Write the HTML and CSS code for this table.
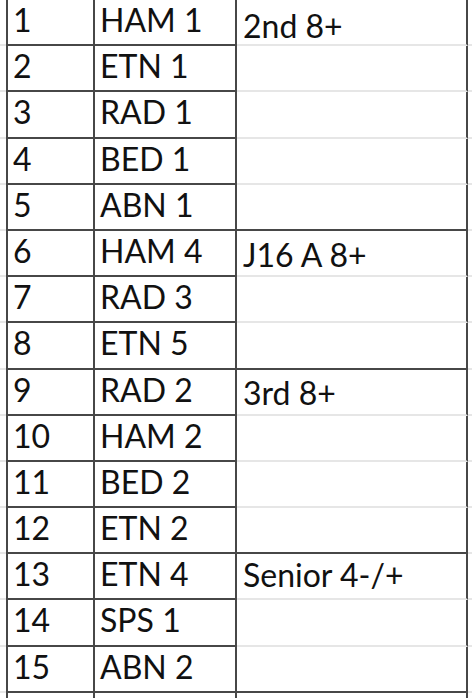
FILE: index.html
```html
<!DOCTYPE html>
<html>
<head>
<meta charset="utf-8">
<link rel="stylesheet" href="styles.css">
</head>
<body>
<div class="sheet">
  <div class="gut"></div><div class="c num">1</div><div class="c crew">HAM 1</div><div class="c grp inner g1">2nd 8+</div><div class="gut"></div>
  <div class="gut"></div><div class="c num">2</div><div class="c crew">ETN 1</div><div class="c grp inner"></div><div class="gut"></div>
  <div class="gut"></div><div class="c num">3</div><div class="c crew">RAD 1</div><div class="c grp inner"></div><div class="gut"></div>
  <div class="gut"></div><div class="c num">4</div><div class="c crew">BED 1</div><div class="c grp inner"></div><div class="gut"></div>
  <div class="gut"></div><div class="c num">5</div><div class="c crew">ABN 1</div><div class="c grp"></div><div class="gut"></div>

  <div class="gut"></div><div class="c num">6</div><div class="c crew">HAM 4</div><div class="c grp inner g2">J16 A 8+</div><div class="gut"></div>
  <div class="gut"></div><div class="c num">7</div><div class="c crew">RAD 3</div><div class="c grp inner"></div><div class="gut"></div>
  <div class="gut"></div><div class="c num">8</div><div class="c crew">ETN 5</div><div class="c grp"></div><div class="gut"></div>

  <div class="gut"></div><div class="c num">9</div><div class="c crew">RAD 2</div><div class="c grp inner g3">3rd 8+</div><div class="gut"></div>
  <div class="gut"></div><div class="c num">10</div><div class="c crew">HAM 2</div><div class="c grp inner"></div><div class="gut"></div>
  <div class="gut"></div><div class="c num">11</div><div class="c crew">BED 2</div><div class="c grp inner"></div><div class="gut"></div>
  <div class="gut"></div><div class="c num">12</div><div class="c crew">ETN 2</div><div class="c grp"></div><div class="gut"></div>

  <div class="gut"></div><div class="c num">13</div><div class="c crew">ETN 4</div><div class="c grp inner g4">Senior 4-/+</div><div class="gut"></div>
  <div class="gut"></div><div class="c num">14</div><div class="c crew">SPS 1</div><div class="c grp inner"></div><div class="gut"></div>
  <div class="gut"></div><div class="c num">15</div><div class="c crew">ABN 2</div><div class="c grp"></div><div class="gut"></div>

  <div class="gut tail"></div><div class="c num tail"></div><div class="c crew tail"></div><div class="c grp tail"></div><div class="gut tail"></div>
</div>
</body>
</html>
```

FILE: styles.css
```css
html, body {
  margin: 0;
  padding: 0;
  background: #ffffff;
  overflow: hidden;
}

.sheet {
  display: grid;
  grid-template-columns: 6px 89px 142px 231px 1fr;
  grid-template-rows: repeat(15, 46.2px) 5px;
  font-family: Lato, "Open Sans", sans-serif;
  font-size: 32px;
  line-height: 32px;
  color: #111111;
}

.gut {
  border-bottom: 2px solid #e6e6e6;
  box-sizing: border-box;
}

.c {
  box-sizing: border-box;
  border-right: 2px solid #474747;
  border-bottom: 2px solid #474747;
  padding-top: 4px;
  white-space: nowrap;
}

.num {
  border-left: 2px solid #474747;
  padding-left: 5px;
}

.crew {
  padding-left: 5px;
}

.grp {
  padding-left: 6px;
}

.grp.inner {
  border-bottom-color: #e6e6e6;
}

.g1 { padding-top: 10px; }
.g2 { padding-top: 8px; }
.g3 { padding-top: 7px; }
.g4 { padding-top: 5px; }

.tail {
  border-bottom: 0;
}
```
